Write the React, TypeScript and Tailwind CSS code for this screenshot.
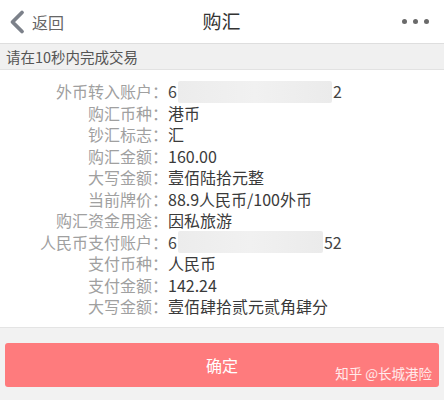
import React from "react";

const font = { fontFamily: '"Noto Sans CJK SC", "Noto Sans", sans-serif' };

type Row = { label: string; value?: string; masked?: { head: string; tail: string; boxW: number } };

const rows: Row[] = [
  { label: "外币转入账户：", masked: { head: "6", tail: "2", boxW: 154 } },
  { label: "购汇币种：", value: "港币" },
  { label: "钞汇标志：", value: "汇" },
  { label: "购汇金额：", value: "160.00" },
  { label: "大写金额：", value: "壹佰陆拾元整" },
  { label: "当前牌价：", value: "88.9人民币/100外币" },
  { label: "购汇资金用途：", value: "因私旅游" },
  { label: "人民币支付账户：", masked: { head: "6", tail: "52", boxW: 145 } },
  { label: "支付币种：", value: "人民币" },
  { label: "支付金额：", value: "142.24" },
  { label: "大写金额：", value: "壹佰肆拾贰元贰角肆分" },
];

function Header() {
  return (
    <div className="flex h-[44px] items-center border-b border-[#dedede] bg-white pl-[7px] pr-2">
      <div className="flex w-[120px] items-center gap-[5px]">
        <svg width="20" height="26" viewBox="0 0 20 26" className="shrink-0">
          <path d="M15 3.5 L5.5 13 L15 22.5" fill="none" stroke="#7c818a" strokeWidth="3.8" strokeLinecap="round" strokeLinejoin="round" />
        </svg>
        <span className="text-[16px] text-[#666]">返回</span>
      </div>
      <div className="flex-1 text-center text-[19px] text-[#333]">购汇</div>
      <div className="flex w-[120px] justify-end gap-[6px] pr-[7px]">
        <span className="h-[5px] w-[5px] rounded-full bg-[#6a6a6a]" />
        <span className="h-[5px] w-[5px] rounded-full bg-[#6a6a6a]" />
        <span className="h-[5px] w-[5px] rounded-full bg-[#6a6a6a]" />
      </div>
    </div>
  );
}

function InfoRow({ row }: { row: Row }) {
  return (
    <div className="flex h-[21.5px] items-center text-[16px] leading-[21.5px]">
      <div className="w-[168px] shrink-0 text-right text-[#a0a0a0]">{row.label}</div>
      {row.masked ? (
        <div className="flex items-center text-[#444]">
          <span>{row.masked.head}</span>
          <span
            className="mx-[1px] h-[22px] rounded-[2px] bg-gradient-to-r from-[#ececec] via-[#f1f1f1] to-[#ebebeb]"
            style={{ width: row.masked.boxW }}
          />
          <span>{row.masked.tail}</span>
        </div>
      ) : (
        <div className="text-[#3a3a3a]">{row.value}</div>
      )}
    </div>
  );
}

export default function App() {
  return (
    <div className="h-[400px] w-[444px] overflow-hidden bg-[#f2f2f2]" style={font}>
      <Header />
      <div className="flex h-[26px] items-center border-b border-[#e2e2e2] bg-[#f0f0f0] px-[6px] text-[14.5px] text-[#555]">
        请在10秒内完成交易
      </div>
      <div className="border-b border-[#e4e4e4] bg-white pb-[9px] pt-[11px]">
        {rows.map((r, i) => (
          <InfoRow key={i} row={r} />
        ))}
      </div>
      <div className="px-[5px] pt-[15px]">
        <div className="relative flex h-[44px] items-center justify-center rounded-[3px] bg-[#fe7b7d] text-[16px] text-white">
          确定
          <span className="absolute bottom-[3px] right-[7px] text-[13.5px] text-white/85">知乎 @长城港险</span>
        </div>
      </div>
    </div>
  );
}
